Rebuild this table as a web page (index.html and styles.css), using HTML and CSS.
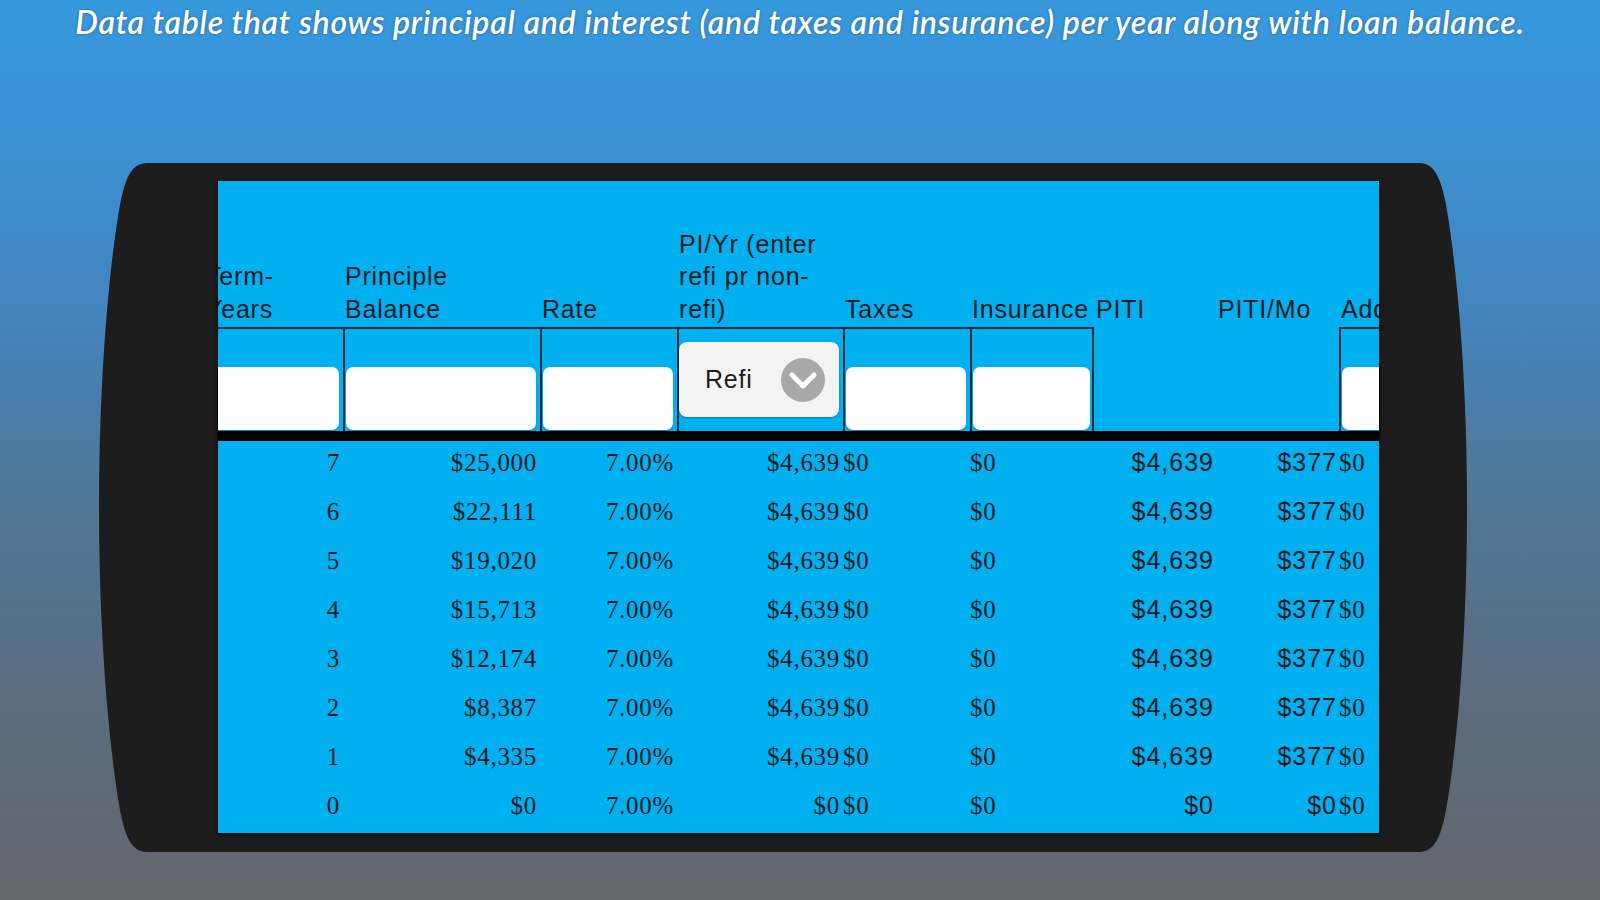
FILE: index.html
```html
<!DOCTYPE html>
<html lang="en">
<head>
<meta charset="utf-8">
<title>Loan table</title>
<link rel="stylesheet" href="styles.css">
</head>
<body>
<h1 class="caption">Data table that shows principal and interest (and taxes and insurance) per year along with loan balance.</h1>
<div class="device">
  <div class="screen">
    <div class="sheet">
      <div class="row head">
        <div class="cell">Term-<br>Years</div>
        <div class="cell">Principle<br>Balance</div>
        <div class="cell">Rate</div>
        <div class="cell">PI/Yr (enter<br>refi pr non-<br>refi)</div>
        <div class="cell">Taxes</div>
        <div class="cell">Insurance</div>
        <div class="cell">PITI</div>
        <div class="cell">PITI/Mo</div>
        <div class="cell">Additional</div>
      </div>
      <div class="row inputs">
        <div class="cell boxed"><span class="field"></span></div>
        <div class="cell boxed"><span class="field"></span></div>
        <div class="cell boxed"><span class="field"></span></div>
        <div class="cell boxed sel">
          <div class="select">
            <span class="select-label">Refi</span>
            <svg class="chev" width="46" height="46" viewBox="0 0 46 46" aria-hidden="true">
              <circle cx="23" cy="23" r="22" fill="#a8a8a8"/>
              <polyline points="12,18 23,29 34,18" fill="none" stroke="#ffffff" stroke-width="5" stroke-linecap="round" stroke-linejoin="round"/>
            </svg>
          </div>
        </div>
        <div class="cell boxed"><span class="field"></span></div>
        <div class="cell boxed last"><span class="field"></span></div>
        <div class="cell"></div>
        <div class="cell"></div>
        <div class="cell boxed"><span class="field"></span></div>
      </div>
      <div class="band"></div>
      <div class="row data"><div class="cell r">7</div><div class="cell r">$25,000</div><div class="cell r">7.00%</div><div class="cell r">$4,639</div><div class="cell l">$0</div><div class="cell l">$0</div><div class="cell r sans">$4,639</div><div class="cell r sans">$377</div><div class="cell l">$0</div></div>
      <div class="row data"><div class="cell r">6</div><div class="cell r">$22,111</div><div class="cell r">7.00%</div><div class="cell r">$4,639</div><div class="cell l">$0</div><div class="cell l">$0</div><div class="cell r sans">$4,639</div><div class="cell r sans">$377</div><div class="cell l">$0</div></div>
      <div class="row data"><div class="cell r">5</div><div class="cell r">$19,020</div><div class="cell r">7.00%</div><div class="cell r">$4,639</div><div class="cell l">$0</div><div class="cell l">$0</div><div class="cell r sans">$4,639</div><div class="cell r sans">$377</div><div class="cell l">$0</div></div>
      <div class="row data"><div class="cell r">4</div><div class="cell r">$15,713</div><div class="cell r">7.00%</div><div class="cell r">$4,639</div><div class="cell l">$0</div><div class="cell l">$0</div><div class="cell r sans">$4,639</div><div class="cell r sans">$377</div><div class="cell l">$0</div></div>
      <div class="row data"><div class="cell r">3</div><div class="cell r">$12,174</div><div class="cell r">7.00%</div><div class="cell r">$4,639</div><div class="cell l">$0</div><div class="cell l">$0</div><div class="cell r sans">$4,639</div><div class="cell r sans">$377</div><div class="cell l">$0</div></div>
      <div class="row data"><div class="cell r">2</div><div class="cell r">$8,387</div><div class="cell r">7.00%</div><div class="cell r">$4,639</div><div class="cell l">$0</div><div class="cell l">$0</div><div class="cell r sans">$4,639</div><div class="cell r sans">$377</div><div class="cell l">$0</div></div>
      <div class="row data"><div class="cell r">1</div><div class="cell r">$4,335</div><div class="cell r">7.00%</div><div class="cell r">$4,639</div><div class="cell l">$0</div><div class="cell l">$0</div><div class="cell r sans">$4,639</div><div class="cell r sans">$377</div><div class="cell l">$0</div></div>
      <div class="row data"><div class="cell r">0</div><div class="cell r">$0</div><div class="cell r">7.00%</div><div class="cell r">$0</div><div class="cell l">$0</div><div class="cell l">$0</div><div class="cell r sans">$0</div><div class="cell r sans">$0</div><div class="cell l">$0</div></div>
    </div>
  </div>
</div>
</body>
</html>
```

FILE: styles.css
```css
html, body {
  margin: 0;
  padding: 0;
}

body {
  width: 1600px;
  height: 900px;
  overflow: hidden;
  background: linear-gradient(180deg, #3699de 0%, #3b91d3 15%, #4384bd 35%, #4f7898 55%, #5a6d80 75%, #63666c 100%);
  font-family: "Liberation Sans", Arial, sans-serif;
}

.caption {
  margin: 0;
  padding-top: 2px;
  height: 41px;
  line-height: 40px;
  text-align: center;
  font-family: Lato, "Liberation Sans", sans-serif;
  font-style: italic;
  font-weight: 600;
  font-size: 32px;
  letter-spacing: 0.7px;
  color: #ffffff;
  text-shadow: 0 0 3px rgba(0, 0, 0, 0.35);
  white-space: nowrap;
}

.device {
  box-sizing: border-box;
  width: 1368px;
  height: 689px;
  margin: 120px 0 0 99px;
  padding: 18px 88px 19px 119px;
  background: url("data:image/svg+xml,%3Csvg xmlns='http://www.w3.org/2000/svg' viewBox='0 0 1368 689' preserveAspectRatio='none'%3E%3Cpath fill='%231d1d1d' d='M48,0 L1320,0 C1338,0 1344,20 1350,60 C1356,100 1368,200 1368,344 C1368,488 1356,589 1350,629 C1344,669 1338,689 1320,689 L48,689 C30,689 24,669 18,629 C12,589 0,488 0,344 C0,200 12,100 18,60 C24,20 30,0 48,0 Z'/%3E%3C/svg%3E") no-repeat 0 0 / 100% 100%;
}

.screen {
  width: 1161px;
  height: 652px;
  overflow: hidden;
  background: #00b0f0;
  box-shadow: 0 0 0 1px #0c0c0c, 0 1px 3px 1px rgba(0, 0, 0, 0.6);
}

.sheet {
  width: 1256px;
  margin-left: -14px;
}

.row {
  display: grid;
  grid-template-columns: 139px 197px 137px 166px 127px 124px 122px 123px 123px;
}

.cell {
  box-sizing: border-box;
  min-width: 0;
  overflow: hidden;
  white-space: nowrap;
}

/* header */
.head {
  height: 146px;
}

.head .cell {
  display: flex;
  align-items: flex-end;
  padding: 0 0 2px 2px;
  font-size: 25px;
  line-height: 32.5px;
  color: #141a1e;
  letter-spacing: 0.8px;
}

/* input row */
.inputs {
  height: 104px;
}

.inputs .cell.boxed {
  display: flex;
  align-items: flex-end;
  border-top: 2px solid #0e2a36;
  border-left: 2px solid #0e2a36;
  padding: 0 4px 1px 1px;
}

.inputs .cell.boxed.last {
  border-right: 2px solid #0e2a36;
  padding-right: 2px;
}

.field {
  display: block;
  width: 100%;
  height: 63px;
  background: #ffffff;
  border-radius: 7px;
  box-shadow: 0 1px 1px rgba(0, 0, 0, 0.25);
}

.inputs .cell.sel {
  align-items: flex-start;
  padding: 13px 4px 0 0;
}

.select {
  box-sizing: border-box;
  width: 100%;
  height: 75px;
  display: flex;
  align-items: center;
  justify-content: space-between;
  padding: 0 13px 0 26px;
  background: #f3f3f3;
  border-radius: 8px;
  box-shadow: 0 1px 2px rgba(0, 0, 0, 0.3);
}

.select-label {
  font-size: 25px;
  letter-spacing: 0.8px;
  color: #1e1e1e;
}

.chev {
  display: block;
  flex: none;
}

.band {
  height: 10px;
  background: #000000;
}

/* data rows */
.data {
  height: 49px;
}

.data .cell {
  font-family: "Liberation Serif", "Times New Roman", serif;
  font-size: 25px;
  line-height: 43px;
  letter-spacing: 0.7px;
  color: #10181c;
}

.data .cell.r {
  text-align: right;
  padding-right: 3px;
}

.data .cell.l {
  text-align: left;
  padding-left: 0;
}

.data .cell.sans {
  font-family: "Liberation Sans", Arial, sans-serif;
  font-size: 25px;
  letter-spacing: 1px;
  padding-right: 2px;
}
```
